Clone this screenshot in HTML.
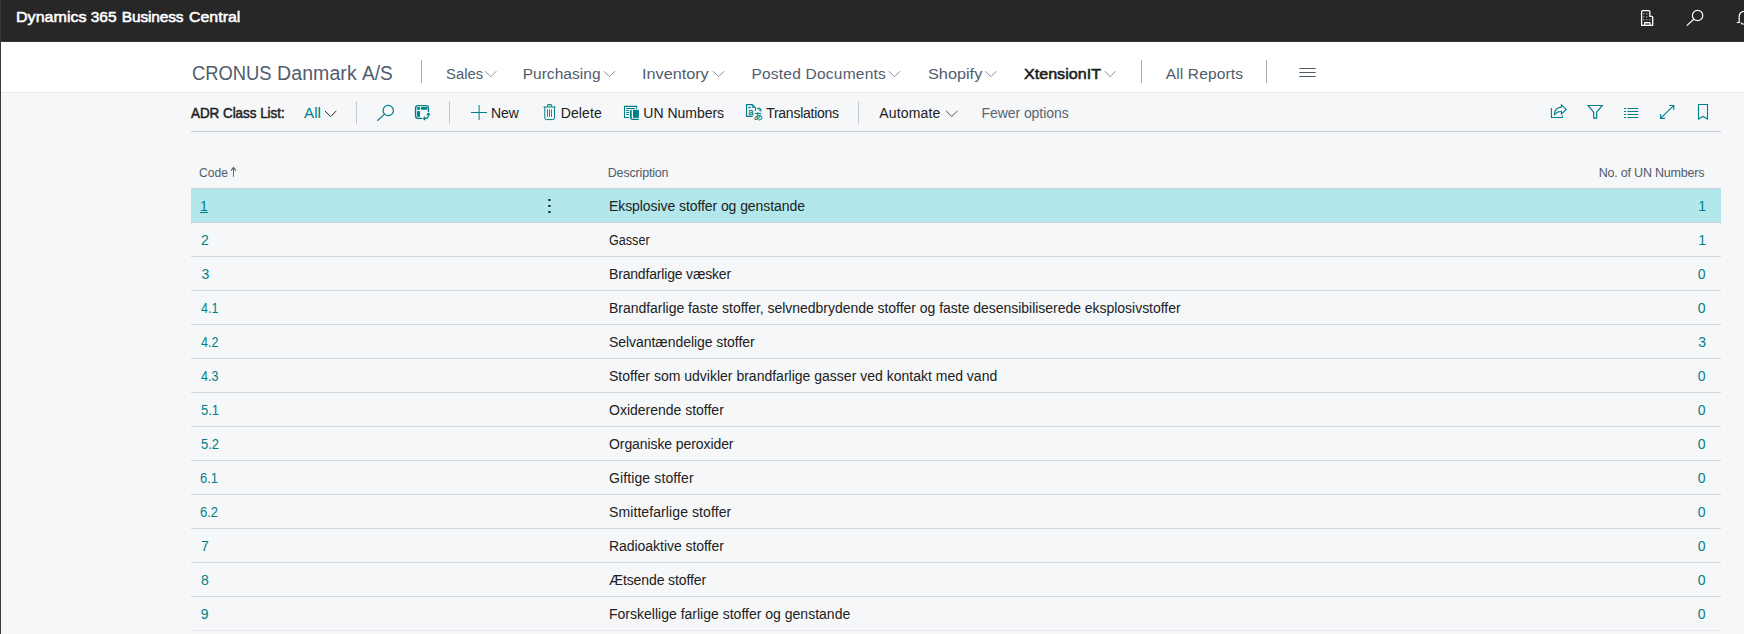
<!DOCTYPE html>
<html lang="en">
<head>
<meta charset="utf-8">
<title>ADR Class List - Dynamics 365 Business Central</title>
<style>
html,body{margin:0;padding:0;}
body{width:1744px;height:634px;overflow:hidden;position:relative;background:#f5f7f9;font-family:"Liberation Sans",sans-serif;}
.abs{position:absolute;}
#hdr{left:0;top:0;width:1744px;height:41px;background:#272727;}
#hdrline{left:0;top:41px;width:1744px;height:1px;background:#363636;}
#nav{left:0;top:42px;width:1744px;height:50px;background:#ffffff;}
#navline{left:0;top:92px;width:1744px;height:1px;background:#ebecee;}
#edge1{left:0;top:0;width:1px;height:42px;background:#3a3a3a;}
#edge2{left:0;top:42px;width:1px;height:592px;background:#3c3c3c;}
.vsep{position:absolute;width:1px;background:#bfc3c9;}
#cmdline{left:191px;top:131px;width:1530px;height:1px;background:#c8ccd1;}
#sel{left:191px;top:189px;width:1530px;height:33px;background:#b2e8ec;}
.rl{position:absolute;left:191px;width:1530px;height:1px;background:#d6d9dc;}
.t{position:absolute;white-space:nowrap;}
svg{position:absolute;overflow:visible;}
</style>
</head>
<body>
<div id="hdr" class="abs"></div>
<div id="hdrline" class="abs"></div>
<div id="nav" class="abs"></div>
<div id="navline" class="abs"></div>
<div id="cmdline" class="abs"></div>
<div id="sel" class="abs"></div>
<div class="rl" style="top:188px;background:#cdcfd6"></div>
<div class="rl" style="top:222px;background:#cdcfd6"></div>
<div class="rl" style="top:256px"></div>
<div class="rl" style="top:290px"></div>
<div class="rl" style="top:324px"></div>
<div class="rl" style="top:358px"></div>
<div class="rl" style="top:392px"></div>
<div class="rl" style="top:426px"></div>
<div class="rl" style="top:460px"></div>
<div class="rl" style="top:494px"></div>
<div class="rl" style="top:528px"></div>
<div class="rl" style="top:562px"></div>
<div class="rl" style="top:596px"></div>
<div class="rl" style="top:630px;background:#e6e8eb"></div>
<div class="vsep" style="left:421px;top:60px;height:23px;background:#a6adb9"></div>
<div class="vsep" style="left:1141px;top:60px;height:23px;background:#a6adb9"></div>
<div class="vsep" style="left:1266px;top:60px;height:23px;background:#a6adb9"></div>
<div class="vsep" style="left:356px;top:101px;height:23px;background:#c6cacf"></div>
<div class="vsep" style="left:449px;top:101px;height:23px;background:#c6cacf"></div>
<div class="vsep" style="left:858px;top:101px;height:23px;background:#c6cacf"></div>
<span class="t" id="ti1" style="left:15.94px;top:7.00px;font-size:15.5px;line-height:19px;font-weight:400;color:#ffffff;letter-spacing:0.000px;transform:scaleX(1.0368);transform-origin:0 0;-webkit-text-stroke:0.55px #ffffff;">Dynamics</span>
<span class="t" id="ti2" style="left:90.63px;top:7.00px;font-size:15.5px;line-height:19px;font-weight:400;color:#ffffff;letter-spacing:0.027px;-webkit-text-stroke:0.55px #ffffff;">365</span>
<span class="t" id="ti3" style="left:121.80px;top:7.00px;font-size:15.5px;line-height:19px;font-weight:400;color:#ffffff;letter-spacing:-0.164px;-webkit-text-stroke:0.55px #ffffff;">Business</span>
<span class="t" id="ti4" style="left:188.97px;top:7.00px;font-size:15.5px;line-height:19px;font-weight:400;color:#ffffff;letter-spacing:0.000px;transform:scaleX(1.0278);transform-origin:0 0;-webkit-text-stroke:0.55px #ffffff;">Central</span>
<span class="t" id="co1" style="left:191.79px;top:61.00px;font-size:19.5px;line-height:24px;font-weight:400;color:#505c6d;letter-spacing:0.000px;transform:scaleX(0.9420);transform-origin:0 0;">CRONUS</span>
<span class="t" id="co2" style="left:277.08px;top:61.00px;font-size:19.5px;line-height:24px;font-weight:400;color:#505c6d;letter-spacing:0.084px;">Danmark</span>
<span class="t" id="co3" style="left:362.32px;top:61.00px;font-size:19.5px;line-height:24px;font-weight:400;color:#505c6d;letter-spacing:0.000px;transform:scaleX(0.9788);transform-origin:0 0;">A/S</span>
<span class="t" id="n1" style="left:445.70px;top:64.00px;font-size:15.5px;line-height:19px;font-weight:400;color:#505c6d;letter-spacing:0.000px;transform:scaleX(0.9563);transform-origin:0 0;">Sales</span>
<span class="t" id="n2" style="left:522.63px;top:64.00px;font-size:15.5px;line-height:19px;font-weight:400;color:#505c6d;letter-spacing:0.039px;">Purchasing</span>
<span class="t" id="n3" style="left:641.81px;top:64.00px;font-size:15.5px;line-height:19px;font-weight:400;color:#505c6d;letter-spacing:0.000px;transform:scaleX(1.0462);transform-origin:0 0;">Inventory</span>
<span class="t" id="n4" style="left:751.39px;top:64.00px;font-size:15.5px;line-height:19px;font-weight:400;color:#505c6d;letter-spacing:0.235px;">Posted Documents</span>
<span class="t" id="n5" style="left:927.57px;top:64.00px;font-size:15.5px;line-height:19px;font-weight:400;color:#505c6d;letter-spacing:0.000px;transform:scaleX(1.0499);transform-origin:0 0;">Shopify</span>
<span class="t" id="n6" style="left:1023.69px;top:64.00px;font-size:15.5px;line-height:19px;font-weight:400;color:#1b1b1b;letter-spacing:0.000px;transform:scaleX(1.0387);transform-origin:0 0;-webkit-text-stroke:0.55px #1b1b1b;">XtensionIT</span>
<span class="t" id="n7" style="left:1165.80px;top:64.00px;font-size:15.5px;line-height:19px;font-weight:400;color:#505c6d;letter-spacing:0.134px;">All Reports</span>
<span class="t" id="c0" style="left:190.74px;top:104.00px;font-size:14px;line-height:18px;font-weight:400;color:#212121;letter-spacing:0.000px;transform:scaleX(0.9557);transform-origin:0 0;-webkit-text-stroke:0.5px #212121;">ADR Class List:</span>
<span class="t" id="c1" style="left:303.89px;top:104.00px;font-size:14px;line-height:18px;font-weight:400;color:#007f88;letter-spacing:0.000px;transform:scaleX(1.0892);transform-origin:0 0;">All</span>
<span class="t" id="c2" style="left:490.90px;top:104.00px;font-size:14px;line-height:18px;font-weight:400;color:#212121;letter-spacing:0.000px;transform:scaleX(0.9953);transform-origin:0 0;">New</span>
<span class="t" id="c3" style="left:560.66px;top:104.00px;font-size:14px;line-height:18px;font-weight:400;color:#212121;letter-spacing:0.113px;">Delete</span>
<span class="t" id="c4" style="left:643.37px;top:104.00px;font-size:14px;line-height:18px;font-weight:400;color:#212121;letter-spacing:-0.021px;">UN Numbers</span>
<span class="t" id="c5" style="left:766.15px;top:104.00px;font-size:14px;line-height:18px;font-weight:400;color:#212121;letter-spacing:-0.252px;">Translations</span>
<span class="t" id="c6" style="left:879.35px;top:104.00px;font-size:14px;line-height:18px;font-weight:400;color:#212121;letter-spacing:0.145px;">Automate</span>
<span class="t" id="c7" style="left:981.45px;top:104.00px;font-size:14px;line-height:18px;font-weight:400;color:#5a6472;letter-spacing:-0.057px;">Fewer options</span>
<span class="t" id="h1" style="left:198.75px;top:165.00px;font-size:12.5px;line-height:16px;font-weight:400;color:#505c6d;letter-spacing:0.000px;transform:scaleX(0.9685);transform-origin:0 0;">Code</span>
<span class="t" id="h2" style="left:607.76px;top:165.00px;font-size:12.5px;line-height:16px;font-weight:400;color:#505c6d;letter-spacing:-0.172px;">Description</span>
<span class="t" id="h3" style="left:1598.74px;top:165.00px;font-size:12.5px;line-height:16px;font-weight:400;color:#505c6d;letter-spacing:-0.211px;">No. of UN Numbers</span>
<span class="t" id="r0c" style="left:200.09px;top:197.00px;font-size:14px;line-height:18px;font-weight:400;color:#007f88;letter-spacing:0.000px;text-decoration:underline;">1</span>
<span class="t" id="r0d" style="left:609.00px;top:197.00px;font-size:14px;line-height:18px;font-weight:400;color:#212121;letter-spacing:-0.076px;">Eksplosive stoffer og genstande</span>
<span class="t" id="r0n" style="left:1698.20px;top:197.00px;font-size:14px;line-height:18px;font-weight:400;color:#007f88;letter-spacing:0.000px;">1</span>
<span class="t" id="r1c" style="left:201.10px;top:231.00px;font-size:14px;line-height:18px;font-weight:400;color:#007f88;letter-spacing:0.000px;">2</span>
<span class="t" id="r1d" style="left:609.00px;top:231.00px;font-size:14px;line-height:18px;font-weight:400;color:#212121;letter-spacing:0.000px;transform:scaleX(0.8992);transform-origin:0 0;">Gasser</span>
<span class="t" id="r1n" style="left:1698.14px;top:231.00px;font-size:14px;line-height:18px;font-weight:400;color:#007f88;letter-spacing:0.000px;">1</span>
<span class="t" id="r2c" style="left:201.39px;top:265.00px;font-size:14px;line-height:18px;font-weight:400;color:#007f88;letter-spacing:0.000px;">3</span>
<span class="t" id="r2d" style="left:609.00px;top:265.00px;font-size:14px;line-height:18px;font-weight:400;color:#212121;letter-spacing:-0.178px;">Brandfarlige væsker</span>
<span class="t" id="r2n" style="left:1697.82px;top:265.00px;font-size:14px;line-height:18px;font-weight:400;color:#007f88;letter-spacing:0.000px;">0</span>
<span class="t" id="r3c" style="left:201.02px;top:299.00px;font-size:14px;line-height:18px;font-weight:400;color:#007f88;letter-spacing:0.000px;transform:scaleX(0.8891);transform-origin:0 0;">4.1</span>
<span class="t" id="r3d" style="left:609.00px;top:299.00px;font-size:14px;line-height:18px;font-weight:400;color:#212121;letter-spacing:-0.029px;">Brandfarlige faste stoffer, selvnedbrydende stoffer og faste desensibiliserede eksplosivstoffer</span>
<span class="t" id="r3n" style="left:1697.82px;top:299.00px;font-size:14px;line-height:18px;font-weight:400;color:#007f88;letter-spacing:0.000px;">0</span>
<span class="t" id="r4c" style="left:201.02px;top:333.00px;font-size:14px;line-height:18px;font-weight:400;color:#007f88;letter-spacing:0.000px;transform:scaleX(0.8909);transform-origin:0 0;">4.2</span>
<span class="t" id="r4d" style="left:609.00px;top:333.00px;font-size:14px;line-height:18px;font-weight:400;color:#212121;letter-spacing:-0.055px;">Selvantændelige stoffer</span>
<span class="t" id="r4n" style="left:1698.22px;top:333.00px;font-size:14px;line-height:18px;font-weight:400;color:#007f88;letter-spacing:0.000px;">3</span>
<span class="t" id="r5c" style="left:201.02px;top:367.00px;font-size:14px;line-height:18px;font-weight:400;color:#007f88;letter-spacing:0.000px;transform:scaleX(0.8906);transform-origin:0 0;">4.3</span>
<span class="t" id="r5d" style="left:609.00px;top:367.00px;font-size:14px;line-height:18px;font-weight:400;color:#212121;letter-spacing:0.003px;">Stoffer som udvikler brandfarlige gasser ved kontakt med vand</span>
<span class="t" id="r5n" style="left:1697.82px;top:367.00px;font-size:14px;line-height:18px;font-weight:400;color:#007f88;letter-spacing:0.000px;">0</span>
<span class="t" id="r6c" style="left:200.55px;top:401.00px;font-size:14px;line-height:18px;font-weight:400;color:#007f88;letter-spacing:0.000px;transform:scaleX(0.9294);transform-origin:0 0;">5.1</span>
<span class="t" id="r6d" style="left:609.00px;top:401.00px;font-size:14px;line-height:18px;font-weight:400;color:#212121;letter-spacing:-0.006px;">Oxiderende stoffer</span>
<span class="t" id="r6n" style="left:1697.82px;top:401.00px;font-size:14px;line-height:18px;font-weight:400;color:#007f88;letter-spacing:0.000px;">0</span>
<span class="t" id="r7c" style="left:200.53px;top:435.00px;font-size:14px;line-height:18px;font-weight:400;color:#007f88;letter-spacing:0.000px;transform:scaleX(0.9308);transform-origin:0 0;">5.2</span>
<span class="t" id="r7d" style="left:609.00px;top:435.00px;font-size:14px;line-height:18px;font-weight:400;color:#212121;letter-spacing:-0.087px;">Organiske peroxider</span>
<span class="t" id="r7n" style="left:1697.82px;top:435.00px;font-size:14px;line-height:18px;font-weight:400;color:#007f88;letter-spacing:0.000px;">0</span>
<span class="t" id="r8c" style="left:200.34px;top:469.00px;font-size:14px;line-height:18px;font-weight:400;color:#007f88;letter-spacing:0.000px;transform:scaleX(0.9213);transform-origin:0 0;">6.1</span>
<span class="t" id="r8d" style="left:609.00px;top:469.00px;font-size:14px;line-height:18px;font-weight:400;color:#212121;letter-spacing:0.116px;">Giftige stoffer</span>
<span class="t" id="r8n" style="left:1697.82px;top:469.00px;font-size:14px;line-height:18px;font-weight:400;color:#007f88;letter-spacing:0.000px;">0</span>
<span class="t" id="r9c" style="left:200.33px;top:503.00px;font-size:14px;line-height:18px;font-weight:400;color:#007f88;letter-spacing:0.000px;transform:scaleX(0.9251);transform-origin:0 0;">6.2</span>
<span class="t" id="r9d" style="left:609.00px;top:503.00px;font-size:14px;line-height:18px;font-weight:400;color:#212121;letter-spacing:0.095px;">Smittefarlige stoffer</span>
<span class="t" id="r9n" style="left:1697.82px;top:503.00px;font-size:14px;line-height:18px;font-weight:400;color:#007f88;letter-spacing:0.000px;">0</span>
<span class="t" id="r10c" style="left:201.06px;top:537.00px;font-size:14px;line-height:18px;font-weight:400;color:#007f88;letter-spacing:0.000px;">7</span>
<span class="t" id="r10d" style="left:609.00px;top:537.00px;font-size:14px;line-height:18px;font-weight:400;color:#212121;letter-spacing:-0.047px;">Radioaktive stoffer</span>
<span class="t" id="r10n" style="left:1697.82px;top:537.00px;font-size:14px;line-height:18px;font-weight:400;color:#007f88;letter-spacing:0.000px;">0</span>
<span class="t" id="r11c" style="left:200.97px;top:571.00px;font-size:14px;line-height:18px;font-weight:400;color:#007f88;letter-spacing:0.000px;">8</span>
<span class="t" id="r11d" style="left:609.00px;top:571.00px;font-size:14px;line-height:18px;font-weight:400;color:#212121;letter-spacing:-0.102px;">Ætsende stoffer</span>
<span class="t" id="r11n" style="left:1697.82px;top:571.00px;font-size:14px;line-height:18px;font-weight:400;color:#007f88;letter-spacing:0.000px;">0</span>
<span class="t" id="r12c" style="left:200.68px;top:605.00px;font-size:14px;line-height:18px;font-weight:400;color:#007f88;letter-spacing:0.000px;">9</span>
<span class="t" id="r12d" style="left:609.00px;top:605.00px;font-size:14px;line-height:18px;font-weight:400;color:#212121;letter-spacing:0.006px;">Forskellige farlige stoffer og genstande</span>
<span class="t" id="r12n" style="left:1697.82px;top:605.00px;font-size:14px;line-height:18px;font-weight:400;color:#007f88;letter-spacing:0.000px;">0</span>
<svg id="ico" width="1744" height="634" viewBox="0 0 1744 634" style="left:0;top:0" fill="none" stroke-linecap="butt" stroke-linejoin="miter">
<!-- header icons -->
<g stroke="#ffffff" stroke-width="1.3" stroke-linejoin="round" stroke-linecap="round">
<path d="M1641.6,25.3 V11.6 Q1641.6,10.6 1642.6,10.6 H1648.8 Q1649.8,10.6 1649.8,11.6 V16.4 H1651.7 Q1652.7,16.4 1652.7,17.4 V25.3 Z"/>
<path d="M1644.7,25.3 V22.6 H1649.9 V25.3"/>
</g>
<g fill="#9a9a9a" stroke="none">
<rect x="1643.1" y="13.1" width="1.3" height="1.3"/><rect x="1646.1" y="13.1" width="1.3" height="1.3"/>
<rect x="1643.1" y="16.1" width="1.3" height="1.3"/><rect x="1646.1" y="16.1" width="1.3" height="1.3"/>
<rect x="1643.1" y="19.1" width="1.3" height="1.3"/><rect x="1646.1" y="19.1" width="1.3" height="1.3"/><rect x="1649.1" y="19.1" width="1.3" height="1.3"/>
<rect x="1646.2" y="23.4" width="2.2" height="1.2"/>
</g>
<g stroke="#ffffff" stroke-width="1.2">
<circle cx="1697.6" cy="15.5" r="5.2"/>
<path d="M1693.8,19.3 L1686.8,25.6"/>
<path d="M1736.8,22.5 H1739.2 V16.3 A5,5 0 0 1 1744.2,11.3 H1747.4 A5,5 0 0 1 1752.4,16.3 V22.5 H1754.8 M1741.2,22.6 V23.2 Q1741.4,24 1742.5,24 H1750"/>
</g>
<!-- nav chevrons -->
<g stroke="#5f6a7a" stroke-width="0.75">
<path d="M485.3,71.2 L490.8,76.7 L496.3,71.2"/>
<path d="M603.9,71.2 L609.4,76.7 L614.9,71.2"/>
<path d="M713.1,71.2 L718.6,76.7 L724.1,71.2"/>
<path d="M889,71.2 L894.5,76.7 L900,71.2"/>
<path d="M985.4,71.2 L990.9,76.7 L996.4,71.2"/>
<path d="M1104.6,71.2 L1110.1,76.7 L1115.6,71.2"/>
</g>
<!-- hamburger -->
<g fill="#505c6d" stroke="none">
<rect x="1299.3" y="68" width="16.4" height="1"/><rect x="1299.3" y="72" width="16.4" height="1"/><rect x="1299.3" y="76" width="16.4" height="1"/>
</g>
<!-- cmd chevrons -->
<path d="M324.9,110.9 L330.6,116.5 L336.3,110.9" stroke="#2b2b3a" stroke-width="1"/>
<path d="M946.1,110.9 L951.8,116.5 L957.5,110.9" stroke="#505050" stroke-width="1"/>
<!-- search -->
<g stroke="#007f88" stroke-width="1.2">
<circle cx="388.25" cy="110.5" r="5.15"/>
<path d="M384.3,114.4 L377.3,120.7"/>
</g>
<!-- layout/design icon -->
<g stroke="#007f88" stroke-width="1.4" stroke-linecap="round">
<path d="M421.6,118.4 H418 Q415.6,118.4 415.6,116 V108 Q415.6,105.6 418,105.6 H426 Q428.4,105.6 428.4,108 V111.6"/>
<path d="M428.4,114.2 V115.6 Q428.4,118.4 425.6,118.4 H424.2" stroke-width="1.2"/>
<path d="M427,114.6 L428.4,113.3 L429.8,114.6" stroke-width="1.1"/>
<path d="M424.9,117 L423.5,118.4 L424.9,119.8" stroke-width="1.1"/>
</g>
<g fill="#007f88" stroke="none">
<rect x="417.1" y="107.1" width="2.9" height="2.7" rx="0.9"/>
<rect x="420.9" y="107.1" width="6.3" height="2.7" rx="0.9"/>
<rect x="417.1" y="111.1" width="2.9" height="5.9" rx="0.9"/>
</g>
<!-- plus -->
<g fill="#007f88" stroke="none">
<rect x="471" y="112" width="16" height="1"/><rect x="478.6" y="105" width="1" height="15"/>
</g>
<!-- trash -->
<g stroke="#007f88" stroke-width="1">
<path d="M543.5,107 H555.6" />
<path d="M547.4,106.8 V106 Q547.4,104.6 548.8,104.6 H550.3 Q551.7,104.6 551.7,106 V106.8" stroke-width="1.1"/>
<path d="M544.8,107 V118 Q544.8,119.6 546.4,119.6 H552.9 Q554.5,119.6 554.5,118 V107"/>
<path d="M547.5,109.4 V116.8 M549.5,109.4 V116.8 M551.5,109.4 V116.8" stroke-width="0.9"/>
</g>
<!-- UN numbers icon -->
<g stroke="#007f88" stroke-width="1.1">
<path d="M629,117.5 H624.5 V106.4 H636.6 V108.8"/>
<path d="M626.2,108.5 H634.9 M626.2,110.5 H629.1 M626.2,112.5 H629.1 M626.2,114.5 H629.1"/>
<path d="M631.6,110.3 Q630.8,110.5 630.8,111.6 V117.9" stroke-width="1.8"/><path d="M630.5,117.6 Q630.7,119.4 632.6,119.4 H638.9" stroke-width="1.2"/>
</g>
<rect x="633" y="109.8" width="5.9" height="8" fill="#007f88"/>
<!-- translate icon -->
<g stroke="#007f88" stroke-width="1.1">
<path d="M752.8,116.4 H746.5 V104.6 H752.4 L755.6,107.9 V110.8"/>
<path d="M752.3,105 V107.4 H754.8" stroke-width="0.9"/>
<path d="M748,107.6 H750.8"/>
<path d="M757.3,108.4 H759.3 Q760.4,108.4 760.4,109.6 V110.4"/>
<path d="M758.8,109.6 L760.4,111.2 L762,109.6" stroke-width="1"/>
</g>
<text x="748.2" y="115" font-family="Liberation Sans, sans-serif" font-size="9.5" font-weight="400" fill="#007f88" stroke="#007f88" stroke-width="0.3">a</text>
<text x="753.4" y="119.9" font-family="Noto Sans CJK JP, sans-serif" font-size="9.5" font-weight="500" fill="#007f88" stroke="none">あ</text>
<!-- share -->
<g stroke="#007f88" stroke-width="1.1">
<path d="M1551.4,108 V117.5 H1562.6 V115.4"/>
<path d="M1561.4,104.9 L1566.4,109.4 L1561.4,113.9 V111.5 C1558,111.3 1556,112.5 1554.4,114.6 C1554.6,110 1557.5,107.3 1561.4,107.1 Z" stroke-linejoin="miter"/>
</g>
<!-- filter -->
<path d="M1588.1,105.5 H1602.3 L1596.7,112.2 V118.2 H1593.7 V112.2 Z" stroke="#007f88" stroke-width="1.2"/>
<!-- list -->
<g fill="#007f88" stroke="none">
<rect x="1624" y="108" width="2" height="1"/><rect x="1627.3" y="108" width="11" height="1"/>
<rect x="1624" y="111" width="2" height="1"/><rect x="1627.3" y="111" width="11" height="1"/>
<rect x="1624" y="114" width="2" height="1"/><rect x="1627.3" y="114" width="11" height="1"/>
<rect x="1624" y="117" width="2" height="1"/><rect x="1627.3" y="117" width="11" height="1"/>
</g>
<!-- expand -->
<g stroke="#007f88" stroke-width="1.1">
<path d="M1660.7,118.2 L1673.7,105.6"/>
<path d="M1669.2,105.5 H1673.8 V110"/>
<path d="M1660.6,114 V118.4 H1665.1"/>
</g>
<!-- bookmark -->
<path d="M1698.5,119 V104.5 H1707.5 V119 L1703,116.4 Z" stroke="#007f88" stroke-width="1.1"/>
<!-- sort arrow -->
<g stroke="#666666" stroke-width="1">
<path d="M233.5,167.3 V176.8"/><path d="M231,170.6 L233.5,167.5 L236,170.6" stroke-width="1.2"/>
</g>
<!-- row dots -->
<g fill="#212121" stroke="none">
<rect x="548.3" y="199" width="2.2" height="2"/><rect x="548.3" y="205" width="2.2" height="2"/><rect x="548.3" y="211" width="2.2" height="2"/>
</g>
</svg>

<div id="edge1" class="abs"></div>
<div id="edge2" class="abs"></div>
</body>
</html>
